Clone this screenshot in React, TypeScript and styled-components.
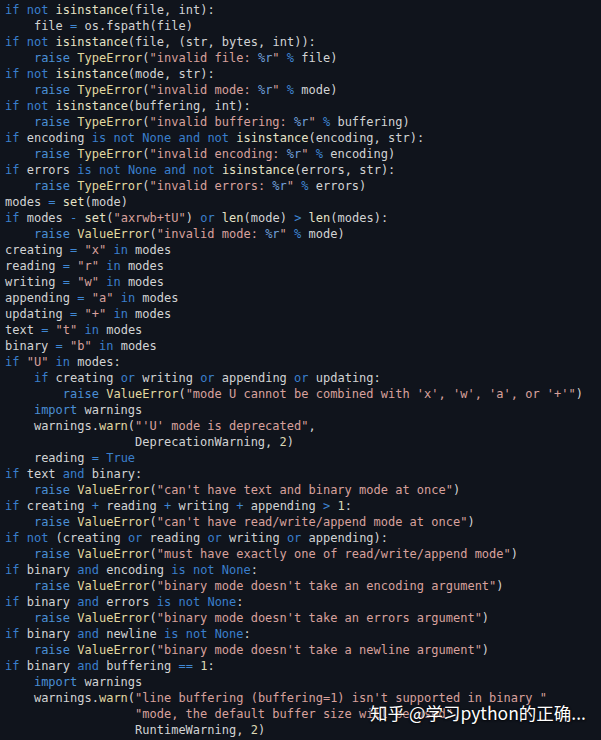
import React from "react";
import styled, { createGlobalStyle } from "styled-components";

const Global = createGlobalStyle`
  html, body { margin: 0; padding: 0; background: #10141c; }
  body { width: 601px; height: 740px; overflow: hidden; }
`;

const Frame = styled.div`
  position: relative;
  width: 601px;
  height: 740px;
  overflow: hidden;
  background: #10141c;
`;

const Code = styled.pre`
  margin: 0;
  padding: 2px 0 0 5px;
  font-family: "DejaVu Sans Mono", "Liberation Mono", monospace;
  font-size: 12px;
  line-height: 16px;
  color: #d2d3d4;
  white-space: pre;
`;

const Line = styled.div`
  height: 16px;
`;

type Kind = "kw" | "kw2" | "builtin" | "exc" | "call" | "str" | "fmt" | "op" | "num" | "plain";

const colors: Record<Kind, string> = {
  kw: "#3a7fcc",
  kw2: "#4a8ed4",
  builtin: "#e6e3c6",
  exc: "#e2d9a0",
  call: "#e0d8a2",
  str: "#d8a19c",
  fmt: "#6f9fd8",
  op: "#3f86d2",
  num: "#dcd9b4",
  plain: "#d2d3d4",
};

const Tok = styled.span<{ $k: Kind }>`
  color: ${(p) => colors[p.$k]};
`;

const Watermark = styled.div`
  position: absolute;
  left: 370px;
  top: 700px;
  font-family: "Noto Sans CJK SC", "Noto Sans", sans-serif;
  font-size: 17.5px;
  line-height: 26px;
  color: #ffffff;
  text-shadow: 0 0 2px rgba(0, 0, 0, 0.7), 0 1px 2px rgba(0, 0, 0, 0.6);
  white-space: nowrap;
`;

const SRC = `if not isinstance(file, int):
    file = os.fspath(file)
if not isinstance(file, (str, bytes, int)):
    raise TypeError("invalid file: %r" % file)
if not isinstance(mode, str):
    raise TypeError("invalid mode: %r" % mode)
if not isinstance(buffering, int):
    raise TypeError("invalid buffering: %r" % buffering)
if encoding is not None and not isinstance(encoding, str):
    raise TypeError("invalid encoding: %r" % encoding)
if errors is not None and not isinstance(errors, str):
    raise TypeError("invalid errors: %r" % errors)
modes = set(mode)
if modes - set("axrwb+tU") or len(mode) > len(modes):
    raise ValueError("invalid mode: %r" % mode)
creating = "x" in modes
reading = "r" in modes
writing = "w" in modes
appending = "a" in modes
updating = "+" in modes
text = "t" in modes
binary = "b" in modes
if "U" in modes:
    if creating or writing or appending or updating:
        raise ValueError("mode U cannot be combined with 'x', 'w', 'a', or '+'")
    import warnings
    warnings.warn("'U' mode is deprecated",
                  DeprecationWarning, 2)
    reading = True
if text and binary:
    raise ValueError("can't have text and binary mode at once")
if creating + reading + writing + appending > 1:
    raise ValueError("can't have read/write/append mode at once")
if not (creating or reading or writing or appending):
    raise ValueError("must have exactly one of read/write/append mode")
if binary and encoding is not None:
    raise ValueError("binary mode doesn't take an encoding argument")
if binary and errors is not None:
    raise ValueError("binary mode doesn't take an errors argument")
if binary and newline is not None:
    raise ValueError("binary mode doesn't take a newline argument")
if binary and buffering == 1:
    import warnings
    warnings.warn("line buffering (buffering=1) isn't supported in binary "
                  "mode, the default buffer size will be used",
                  RuntimeWarning, 2)`;

const KW = new Set(["if", "not", "is", "None", "and", "or", "in", "True"]);
const KW2 = new Set(["raise", "import"]);
const BUILTIN = new Set(["isinstance", "set", "len"]);
const EXC = new Set(["TypeError", "ValueError"]);
const CALL = new Set(["warn"]);

type T = { k: Kind; t: string };

function tokenize(line: string): T[] {
  const out: T[] = [];
  const re = /("[^"]*")|([A-Za-z_]\w*)|(\d+)|(==|[=+\-%<>])|(\s+)|(.)/g;
  let m: RegExpExecArray | null;
  while ((m = re.exec(line))) {
    if (m[1]) {
      const parts = m[1].split(/(%r)/);
      parts.forEach((p) => {
        if (!p) return;
        out.push({ k: p === "%r" ? "fmt" : "str", t: p });
      });
    } else if (m[2]) {
      const w = m[2];
      let k: Kind = "plain";
      if (KW.has(w)) k = "kw";
      else if (KW2.has(w)) k = "kw2";
      else if (BUILTIN.has(w)) k = "builtin";
      else if (EXC.has(w)) k = "exc";
      else if (CALL.has(w)) k = "call";
      out.push({ k, t: w });
    } else if (m[3]) {
      out.push({ k: "num", t: m[3] });
    } else if (m[4]) {
      out.push({ k: "op", t: m[4] });
    } else {
      out.push({ k: "plain", t: m[0] });
    }
  }
  return out;
}

export default function App() {
  const lines = SRC.split("\n");
  return (
    <Frame>
      <Global />
      <Code>
        {lines.map((l, i) => (
          <Line key={i}>
            {tokenize(l).map((t, j) => (
              <Tok key={j} $k={t.k}>
                {t.t}
              </Tok>
            ))}
          </Line>
        ))}
      </Code>
      <Watermark>知乎 @学习python的正确...</Watermark>
    </Frame>
  );
}
